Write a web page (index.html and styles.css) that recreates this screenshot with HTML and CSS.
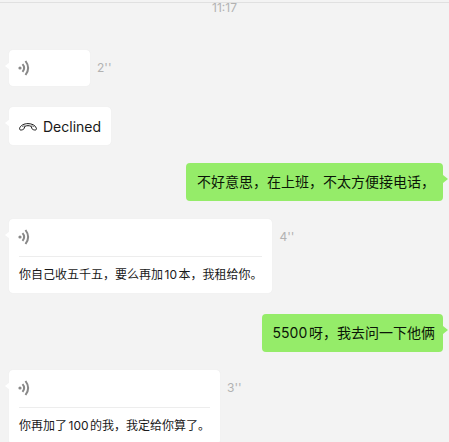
FILE: index.html
```html
<!DOCTYPE html>
<html lang="zh-CN">
<head>
<meta charset="utf-8">
<meta name="viewport" content="width=device-width, initial-scale=1">
<title>Chat</title>
<link rel="stylesheet" href="styles.css">
</head>
<body>
<svg class="symbols" aria-hidden="true">
  <symbol id="voice" viewBox="0 0 12 16">
    <circle cx="2" cy="8" r="1.6" fill="currentColor"/>
    <path d="M4.500 4.200Q7.800 8 4.500 11.800M7.500 1Q12.800 8 7.500 15" fill="none" stroke="currentColor" stroke-width="2"/>
  </symbol>
  <symbol id="phone" viewBox="0 0 18 8">
    <path d="M.6 5.3C1.4 2.3 5.3.6 9 .6s7.600 1.700 8.400 4.700c.3 1.300-.6 1.900-1.800 1.700-1.500-.2-2.600-.8-2.900-1.900-.2-.9-.2-1.500-.8-1.900-1.600-.7-4.200-.7-5.800 0-.6.4-.6 1-.8 1.900C5 6.200 3.900 6.800 2.400 7 1.200 7.200.3 6.600.6 5.300Z" fill="none" stroke="currentColor" stroke-width="1"/>
    <path d="M6 3.200C5 2.700 3.900 3 3 3.900M12 3.200c1-.5 2.100-.2 3 .7" fill="none" stroke="currentColor" stroke-width=".6"/>
  </symbol>
</svg>
<main class="chat">
  <time class="time">11:17</time>
  <article class="message voice">
    <div class="bubble">
      <button class="play" aria-label="播放语音"><svg class="voice-icon"><use href="#voice"/></svg></button>
    </div>
    <span class="duration">2''</span>
  </article>
  <article class="message">
    <div class="bubble call"><svg class="phone-icon" aria-hidden="true"><use href="#phone"/></svg><span>Declined</span></div>
  </article>
  <article class="message sent">
    <p class="bubble text">不好意思，在上班，不太方便接电话，</p>
  </article>
  <article class="message voice">
    <div class="bubble">
      <button class="play" aria-label="播放语音"><svg class="voice-icon"><use href="#voice"/></svg></button>
      <p class="transcript">你自己收五千五，要么再加10本，我租给你。</p>
    </div>
    <span class="duration">4''</span>
  </article>
  <article class="message sent">
    <p class="bubble text">5500呀，我去问一下他俩</p>
  </article>
  <article class="message voice">
    <div class="bubble">
      <button class="play" aria-label="播放语音"><svg class="voice-icon"><use href="#voice"/></svg></button>
      <p class="transcript">你再加了100的我，我定给你算了。</p>
    </div>
    <span class="duration">3''</span>
  </article>
</main>
</body>
</html>
```

FILE: styles.css
```css
* {
  box-sizing: border-box;
}

body {
  margin: 0;
  background: #f3f3f3;
  color: #191919;
  font-family: Inter, "Noto Sans CJK SC", sans-serif;
  font-size: 14px;
  line-height: 18px;
  text-autospace: normal;
}

p {
  margin: 0;
}

.symbols {
  position: absolute;
  width: 0;
  height: 0;
}

.chat {
  display: flex;
  flex-direction: column;
  gap: 18px;
  height: 100vh;
  margin: 0;
  padding: 2px 6px 0 9px;
  overflow: hidden;
}

.time {
  flex: none;
  margin: 0 -6px 12px -9px;
  border-top: 1px solid #e0e0e0;
  color: #b2b2b2;
  font-size: 12px;
  line-height: 10px;
  padding-bottom: 7px;
  text-align: center;
}

.message {
  display: flex;
  flex: none;
  align-items: flex-start;
  gap: 7px;
}

.voice {
  margin-bottom: 3px;
}

.sent {
  justify-content: flex-end;
}

.bubble {
  position: relative;
  min-width: 81px;
  padding: 0 10px;
  border-radius: 4px;
  background: #fff;
  box-shadow: 0 0 1px #e4e4e4;
}

.bubble::before {
  content: "";
  position: absolute;
  top: 12px;
  left: -4px;
  width: 5px;
  height: 8px;
  background: inherit;
  clip-path: polygon(0 50%, 100% 0, 100% 100%);
}

.call {
  display: flex;
  align-items: center;
  gap: 6px;
  padding: 11px 10px 9px;
}

.text {
  padding: 10px 8px 10px 11px;
}

.sent .bubble {
  background: #95ec69;
  box-shadow: none;
  color: #0b1607;
}

.sent .bubble::before {
  right: -5px;
  left: auto;
  clip-path: polygon(0 0, 100% 50%, 0 100%);
}

.play {
  display: flex;
  align-items: center;
  width: 100%;
  height: 36px;
  padding: 0;
  border: 0;
  background: none;
  color: #888;
}

.voice-icon {
  width: 12px;
  height: 16px;
  margin-left: -1px;
}

.phone-icon {
  width: 18px;
  height: 8px;
}

.transcript {
  margin-top: 1px;
  padding: 9px 0;
  border-top: 1px solid #ededed;
  font-size: 12px;
}

.duration {
  color: #b2b2b2;
  font-size: 12px;
  line-height: 36px;
}
```
